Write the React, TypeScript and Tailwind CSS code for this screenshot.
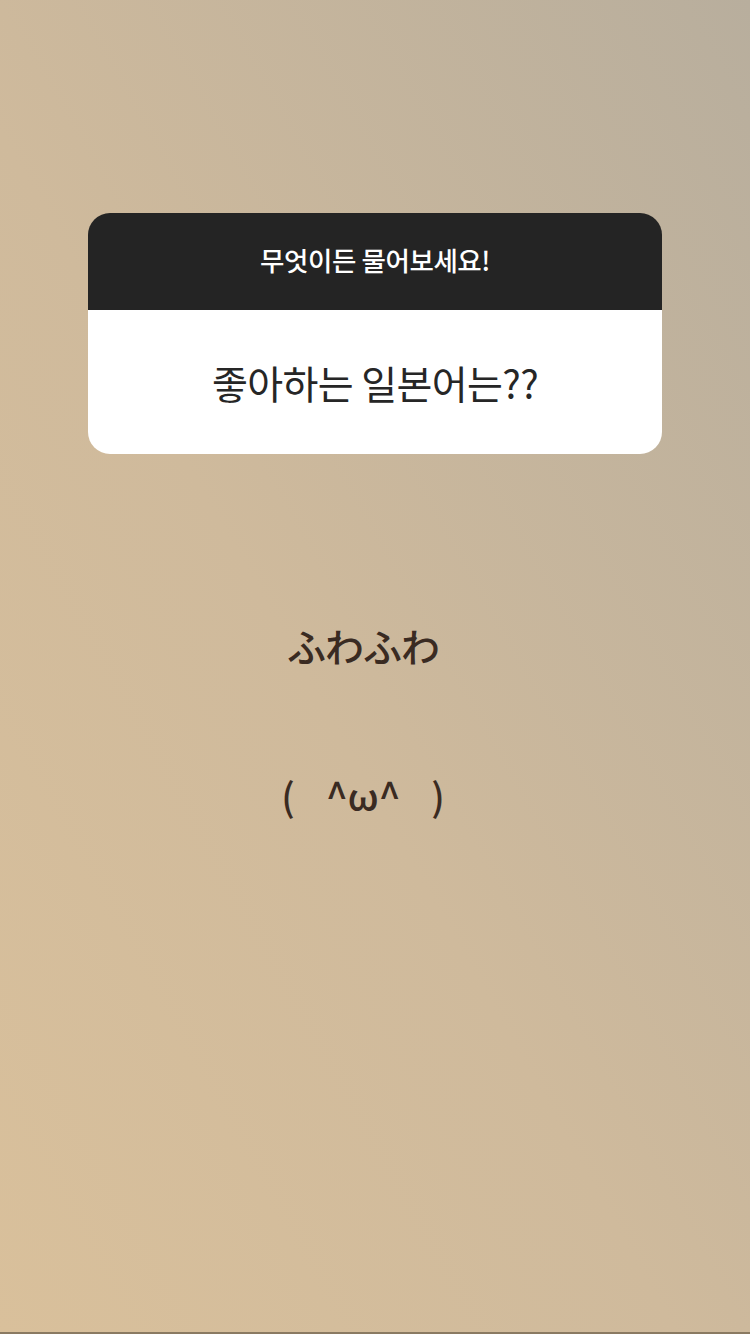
export default function App() {
  return (
    <div
      className="relative w-[750px] h-[1334px] overflow-hidden flex flex-col items-center bg-[linear-gradient(to_top_right,#d9c09b_0%,#cfba9c_45%,#b8ae9d_100%)]"
      style={{ fontFamily: '"Noto Sans CJK KR", "Noto Sans CJK JP", "Noto Sans", sans-serif' }}
    >
      <div className="mt-[213px] w-[574px] rounded-[22px] overflow-hidden flex flex-col">
        <div className="h-[97px] bg-[#242424] flex items-center justify-center pb-[3px]">
          <span className="text-white text-[26.5px] font-medium tracking-[-0.4px]">무엇이든 물어보세요!</span>
        </div>
        <div className="h-[144px] bg-white flex items-center justify-center">
          <span className="text-[#262626] text-[39px] tracking-[-0.6px]">좋아하는 일본어는??</span>
        </div>
      </div>
      <div className="mt-[172px] mr-[24px] text-[#3a2b22] text-[39px] font-medium leading-none tracking-[-1px]">ふわふわ</div>
      <div className="mt-[110px] mr-[24px] h-[40px] flex items-baseline text-[#3a2b22] font-medium leading-none">
        <span className="text-[38px]">(</span>
        <span className="ml-[31px] text-[39px] tracking-[-0.5px]">^ω^</span>
        <span className="ml-[31px] text-[38px]">)</span>
      </div>
      <div className="absolute bottom-0 left-0 w-full h-[2px] bg-[#8a7a62]" />
    </div>
  );
}
